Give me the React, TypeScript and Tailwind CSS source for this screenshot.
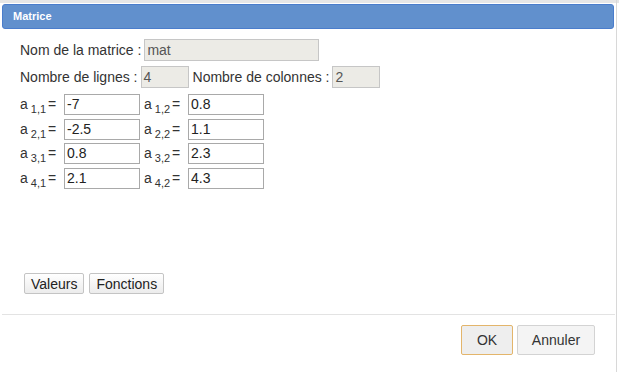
import React from 'react';

const font = { fontFamily: '"Liberation Sans", Arial, sans-serif' };

function Cell({ i, j, value }: { i: number; j: number; value: string }) {
  return (
    <div className="flex items-center">
      <span className="w-[44px] text-[14px] text-[#333] whitespace-nowrap">
        a<span className="relative top-[4px] ml-[3px] mr-[2px] text-[11px]">{i},{j}</span>=
      </span>
      <div className="w-[76px] h-[21px] border border-[#a9a9a9] bg-white px-[2px] text-[14px] leading-[19px] text-[#222]">
        {value}
      </div>
    </div>
  );
}

export default function App() {
  const rows = [
    ['-7', '0.8'],
    ['-2.5', '1.1'],
    ['0.8', '2.3'],
    ['2.1', '4.3'],
  ];
  return (
    <div className="w-[619px] h-[372px] bg-white relative overflow-hidden" style={font}>
      <div className="h-[3px] bg-[#e6e6e6]" />
      <div className="absolute right-[2px] top-0 bottom-0 w-px bg-[#d8d8d8]" />
      <div className="mx-[2px] mr-[5px] mt-[1px] h-[25px] rounded-[3px] border border-[#4a7dcc] bg-[#6190cd] flex items-center pl-[10px]">
        <span className="text-white text-[11px] font-bold">Matrice</span>
      </div>

      <div className="pl-[20px] pt-[10px] flex flex-col text-[14px] text-[#333]">
        <div className="flex items-center h-[22px]">
          <span>Nom de la matrice :</span>
          <div className="ml-[3px] w-[175px] h-[22px] border border-[#c6c6c6] bg-[#ecebe6] px-[2px] leading-[20px] text-[#555]">
            mat
          </div>
        </div>
        <div className="flex items-center h-[22px] mt-[5px]">
          <span>Nombre de lignes :</span>
          <div className="ml-[3px] w-[48px] h-[22px] border border-[#c6c6c6] bg-[#ecebe6] px-[2px] leading-[20px] text-[#555]">
            4
          </div>
          <span className="ml-[4px]">Nombre de colonnes :</span>
          <div className="ml-[3px] w-[48px] h-[22px] border border-[#c6c6c6] bg-[#ecebe6] px-[2px] leading-[20px] text-[#555]">
            2
          </div>
        </div>
        <div className="flex flex-col gap-[3.5px] mt-[6px]">
          {rows.map((r, idx) => (
            <div key={idx} className="flex gap-[4px]">
              <Cell i={idx + 1} j={1} value={r[0]} />
              <Cell i={idx + 1} j={2} value={r[1]} />
            </div>
          ))}
        </div>
      </div>

      <div className="absolute left-[24px] top-[273px] flex gap-[5px]">
        <button className="h-[21px] px-[6px] border border-[#c4c4c4] rounded-[2px] bg-gradient-to-b from-white to-[#ececec] text-[14px] text-[#222]">
          Valeurs
        </button>
        <button className="h-[21px] px-[6px] border border-[#c4c4c4] rounded-[2px] bg-gradient-to-b from-white to-[#ececec] text-[14px] text-[#222]">
          Fonctions
        </button>
      </div>

      <div className="absolute left-[2px] right-[4px] top-[314px] h-px bg-[#e3e3e3]" />

      <div className="absolute right-[24px] top-[325px] flex gap-[4px]">
        <button className="w-[52px] h-[30px] border border-[#e3b56b] rounded-[2px] bg-[#eeeeee] text-[14px] text-[#333]">
          OK
        </button>
        <button className="w-[78px] h-[30px] border border-[#d3d3d3] rounded-[2px] bg-[#f4f4f4] text-[14px] text-[#333]">
          Annuler
        </button>
      </div>
    </div>
  );
}
